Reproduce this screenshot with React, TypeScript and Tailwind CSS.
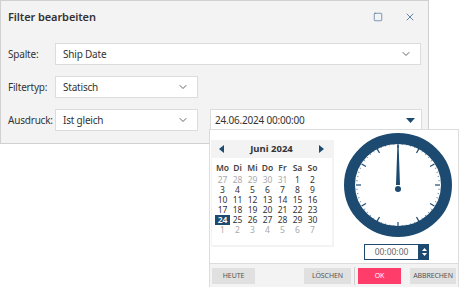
import { ChevronDown, Square, X } from 'lucide-react'

const days = [
  [27, 28, 29, 30, 31, 1, 2],
  [3, 4, 5, 6, 7, 8, 9],
  [10, 11, 12, 13, 14, 15, 16],
  [17, 18, 19, 20, 21, 22, 23],
  [24, 25, 26, 27, 28, 29, 30],
  [1, 2, 3, 4, 5, 6, 7],
]

function Clock() {
  const cx = 54
  const cy = 52
  const ticks = []
  for (let i = 0; i < 60; i++) {
    const a = (i * 6 * Math.PI) / 180
    const r1 = 42
    const r2 = i % 5 === 0 ? 37 : 40.5
    ticks.push(
      <line
        key={i}
        x1={cx + r1 * Math.sin(a)}
        y1={cy - r1 * Math.cos(a)}
        x2={cx + r2 * Math.sin(a)}
        y2={cy - r2 * Math.cos(a)}
        stroke="#1d4a70"
        strokeWidth={i % 5 === 0 ? 1.2 : 0.6}
      />
    )
  }
  return (
    <svg width="108" height="104" viewBox="0 0 108 104">
      <ellipse cx={cx} cy={cy} rx="48.5" ry="46.5" fill="white" stroke="#1d4a70" strokeWidth="11" />
      {ticks}
      <polygon points={`${cx - 2},${cy} ${cx - 0.6},${cy - 40} ${cx + 0.6},${cy - 40} ${cx + 2},${cy}`} fill="#1d4a70" />
      <circle cx={cx} cy={cy + 4} r="3" fill="#1d4a70" />
    </svg>
  )
}

export default function App() {
  return (
    <div className="relative w-[460px] h-[287px] bg-white overflow-hidden font-['Noto_Sans',sans-serif] text-[#333]">
      {/* dialog */}
      <div className="w-[429px] h-[144px] bg-[#f3f3f3] border border-[#d0d0d0]">
        <div className="flex items-center h-[32px] pl-[7px] pr-[12px]">
          <span className="text-[11px] font-semibold text-[#333] flex-1 tracking-[-0.1px]">Filter bearbeiten</span>
          <Square size={10} strokeWidth={1.6} className="text-[#3e6a96] mr-[21px]" />
          <X size={12} strokeWidth={1.6} className="text-[#3e6a96]" />
        </div>
        <div className="flex flex-col gap-[11px] pt-[10px] pl-[7px] text-[10px] tracking-[-0.2px]">
          <div className="flex items-center">
            <span className="w-[47px]">Spalte:</span>
            <div className="w-[366px] h-[22px] bg-white border border-[#dcdcdc] flex items-center justify-between pl-[7px] pr-[8px]">
              <span>Ship Date</span>
              <ChevronDown size={12} className="text-[#666]" />
            </div>
          </div>
          <div className="flex items-center">
            <span className="w-[47px]">Filtertyp:</span>
            <div className="w-[143px] h-[22px] bg-white border border-[#dcdcdc] flex items-center justify-between pl-[7px] pr-[8px]">
              <span>Statisch</span>
              <ChevronDown size={12} className="text-[#666]" />
            </div>
          </div>
          <div className="flex items-center">
            <span className="w-[47px]">Ausdruck:</span>
            <div className="w-[143px] h-[22px] bg-white border border-[#dcdcdc] flex items-center justify-between pl-[7px] pr-[8px]">
              <span>Ist gleich</span>
              <ChevronDown size={12} className="text-[#666]" />
            </div>
            <div className="ml-[12px] w-[212px] h-[22px] bg-white border border-[#dcdcdc] flex items-center justify-between pl-[4px] pr-[6px]">
              <span>24.06.2024 00:00:00</span>
              <svg width="9" height="5" viewBox="0 0 9 5">
                <polygon points="0,0 9,0 4.5,5" fill="#1d4a70" />
              </svg>
            </div>
          </div>
        </div>
      </div>

      {/* date time popup */}
      <div className="absolute left-[209px] top-[129px] w-[250px] h-[160px] bg-white border border-[#dcdcdc] flex flex-col">
        <div className="flex flex-1">
          <div className="w-[124px] pt-[10px] pl-[1px]">
            <div className="bg-[#f3f3f3] h-[107px] pb-[2px] pr-[2px]">
              <div className="flex items-center justify-between h-[18px] px-[8px]">
                <svg width="5" height="8" viewBox="0 0 5 8"><polygon points="5,0 5,8 0,4" fill="#1d4a70" /></svg>
                <span className="text-[9.5px] font-bold">Juni 2024</span>
                <svg width="5" height="8" viewBox="0 0 5 8"><polygon points="0,0 0,8 5,4" fill="#1d4a70" /></svg>
              </div>
              <div className="bg-white ml-[1px] h-[87px] pt-[3px] pl-[3px] text-[8.5px] leading-[10px]">
                <div className="grid grid-cols-[repeat(7,15px)] font-semibold text-[#444] h-[14px] items-center">
                  {['Mo', 'Di', 'Mi', 'Do', 'Fr', 'Sa', 'So'].map(d => (
                    <span key={d} className="text-center">{d}</span>
                  ))}
                </div>
                {days.map((row, ri) => (
                  <div key={ri} className="grid grid-cols-[repeat(7,15px)] h-[10px]">
                    {row.map((d, ci) => {
                      const out = (ri === 0 && d > 20) || ri === 5
                      const sel = ri === 4 && ci === 0
                      return (
                        <span
                          key={ci}
                          className={
                            sel
                              ? 'text-center bg-[#1d4a70] text-white font-semibold'
                              : out
                              ? 'text-center text-[#aaa]'
                              : 'text-center text-[#333]'
                          }
                        >
                          {d}
                        </span>
                      )
                    })}
                  </div>
                ))}
              </div>
            </div>
          </div>
          <div className="flex flex-col items-start pl-[10px] pt-[3px]">
            <Clock />
            <div className="flex mt-[7px] ml-[20px]">
              <div className="w-[55px] h-[16px] border border-[#1d4a70] flex items-center justify-center text-[8.5px] text-[#666]">
                00:00:00
              </div>
              <div className="w-[10px] h-[16px] bg-[#1d4a70] flex flex-col items-center justify-center gap-[2px]">
                <svg width="5" height="3" viewBox="0 0 5 3"><polygon points="0,3 5,3 2.5,0" fill="white" /></svg>
                <svg width="5" height="3" viewBox="0 0 5 3"><polygon points="0,0 5,0 2.5,3" fill="white" /></svg>
              </div>
            </div>
          </div>
        </div>
        <div className="h-[25px] bg-[#f3f3f3] border-t border-[#dcdcdc] flex items-center px-[2px] text-[7px] tracking-[-0.1px]">
          <div className="w-[43px] h-[16px] bg-[#e0e0e0] flex items-center justify-center text-[#555]">HEUTE</div>
          <div className="flex-1" />
          <div className="w-[47px] h-[16px] bg-[#e0e0e0] flex items-center justify-center text-[#555]">LÖSCHEN</div>
          <div className="w-px h-[18px] bg-[#cfcfcf] mx-[3px]" />
          <div className="w-[43px] h-[16px] bg-[#ff3d6b] flex items-center justify-center text-white">OK</div>
          <div className="w-[46px] h-[16px] bg-[#e0e0e0] flex items-center justify-center text-[#555] ml-[9px]">ABBRECHEN</div>
        </div>
      </div>
    </div>
  )
}
